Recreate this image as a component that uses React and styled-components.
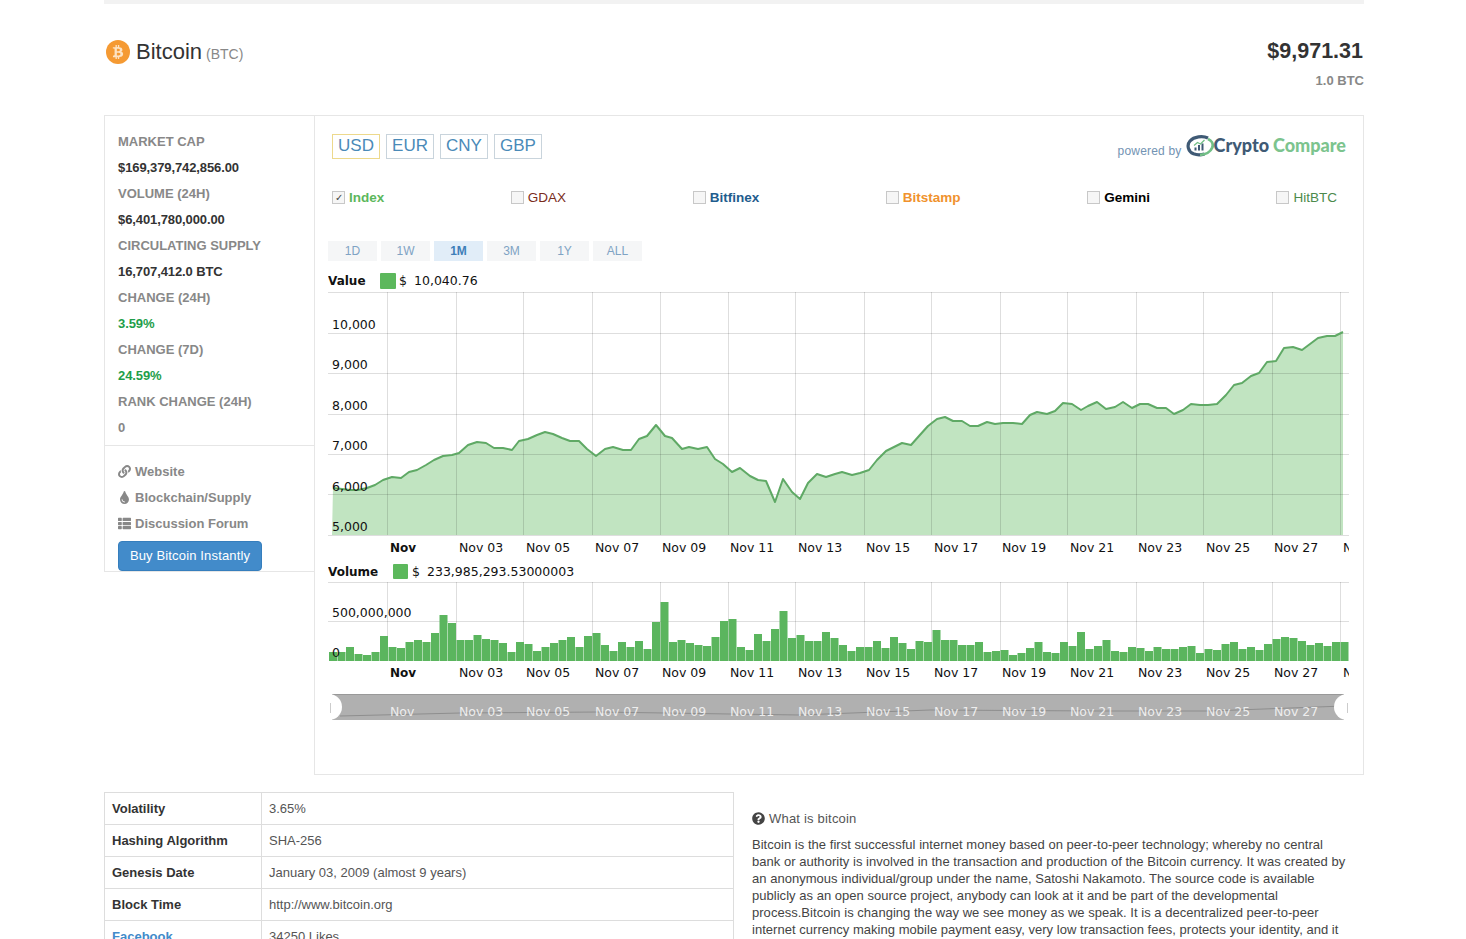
import React from "react";
import styled, { createGlobalStyle } from "styled-components";
import { FaLink, FaTint, FaThList, FaQuestionCircle, FaBtc } from "react-icons/fa";

const Global = createGlobalStyle`
  html, body {
    margin: 0;
    padding: 0;
    height: 939px;
    overflow: hidden;
    background: #fff;
    font-family: "Liberation Sans", Arial, sans-serif;
    font-size: 13px;
    color: #333;
  }
  * { box-sizing: border-box; }
`;

const linePoints = [
  [333, 488], [342, 489], [350, 490], [358, 490], [367, 488], [375, 485], [383, 480], [392, 477], [401, 478],
  [409, 472], [417, 470], [426, 465], [434, 460], [443, 456], [452, 455], [459, 453], [468, 445], [477, 442],
  [486, 443], [494, 448], [503, 448], [512, 450], [519, 441], [528, 439], [537, 435], [545, 432], [553, 434],
  [562, 438], [570, 441], [579, 441], [587, 449], [596, 456], [605, 449], [613, 447], [623, 450], [631, 450],
  [639, 439], [647, 436], [656, 425], [665, 436], [672, 438], [682, 449], [689, 447], [698, 449], [707, 447],
  [715, 459], [723, 464], [732, 472], [740, 468], [750, 476], [758, 480], [766, 481], [775, 502], [783, 479],
  [792, 492], [800, 499], [808, 483], [817, 474], [826, 477], [835, 474], [842, 472], [852, 475], [860, 473],
  [869, 470], [877, 460], [886, 451], [894, 447], [902, 443], [911, 445], [919, 436], [928, 426], [937, 419],
  [945, 417], [953, 421], [962, 421], [970, 426], [978, 426], [987, 422], [995, 424], [1003, 423], [1013, 423],
  [1022, 424], [1030, 415], [1037, 412], [1047, 414], [1055, 411], [1063, 403], [1072, 404], [1081, 410],
  [1088, 406], [1097, 402], [1106, 409], [1115, 407], [1123, 402], [1132, 408], [1140, 404], [1148, 404],
  [1157, 408], [1166, 408], [1174, 414], [1183, 410], [1191, 404], [1200, 405], [1208, 405], [1217, 404],
  [1226, 395], [1234, 385], [1242, 383], [1251, 376], [1259, 373], [1267, 362], [1276, 361], [1284, 348],
  [1293, 347], [1302, 350], [1310, 344], [1318, 338], [1327, 336], [1335, 336], [1343, 332],
];

// bar heights in px, read off the volume chart
const volumes = [
  9, 9, 14, 7, 6, 9, 25, 14, 13, 19, 21, 19, 28, 46, 38, 21, 21, 26, 22, 21, 18, 9, 19, 17, 10, 14, 18, 21, 24,
  14, 25, 28, 16, 10, 19, 14, 20, 12, 39, 59, 19, 21, 18, 16, 15, 24, 40, 42, 14, 11, 27, 20, 32, 50, 23, 26,
  20, 20, 29, 23, 16, 10, 14, 14, 20, 13, 24, 18, 12, 20, 19, 31, 21, 21, 16, 16, 19, 9, 10, 11, 6, 8, 13, 19,
  9, 8, 19, 15, 29, 12, 15, 21, 10, 9, 14, 13, 10, 14, 12, 12, 14, 15, 8, 12, 11, 17, 19, 12, 14, 11, 17, 22,
  24, 23, 20, 16, 18, 15, 19, 19,
];

const gridX = [387, 456, 523, 592, 660, 728, 795, 864, 931, 1000, 1067, 1136, 1203, 1272, 1340];
const priceLines = [292, 333, 373, 414, 454, 494, 535];
const priceLabels = [["10,000", 329], ["9,000", 369], ["8,000", 410], ["7,000", 450], ["6,000", 491], ["5,000", 531]];
const dateLabels = [
  ["Nov 03", 459], ["Nov 05", 526], ["Nov 07", 595], ["Nov 09", 662], ["Nov 11", 730], ["Nov 13", 798],
  ["Nov 15", 866], ["Nov 17", 934], ["Nov 19", 1002], ["Nov 21", 1070], ["Nov 23", 1138], ["Nov 25", 1206],
  ["Nov 27", 1274],
];

const stats = [
  ["MARKET CAP", "$169,379,742,856.00"],
  ["VOLUME (24H)", "$6,401,780,000.00"],
  ["CIRCULATING SUPPLY", "16,707,412.0 BTC"],
  ["CHANGE (24H)", "3.59%", "up"],
  ["CHANGE (7D)", "24.59%", "up"],
  ["RANK CHANGE (24H)", "0", "muted"],
];

const exchanges = [
  { name: "Index", color: "#5cb85c", bold: true, checked: true },
  { name: "GDAX", color: "#7a2c1c" },
  { name: "Bitfinex", color: "#1f5d8e", bold: true },
  { name: "Bitstamp", color: "#f0922e", bold: true },
  { name: "Gemini", color: "#000", bold: true },
  { name: "HitBTC", color: "#4c8a4c" },
];

const facts = [
  ["Volatility", "3.65%"],
  ["Hashing Algorithm", "SHA-256"],
  ["Genesis Date", "January 03, 2009 (almost 9 years)"],
  ["Block Time", "http://www.bitcoin.org"],
  ["Facebook", "34250 Likes", true],
];

const App = () => {
  const linePath = linePoints.map((p) => p.join(",")).join(" ");
  const areaPath = `332,535 ${linePath} 1343,535`;
  return (
    <Page>
      <Global />
      <TopBar />
      <Header>
        <Title>
          <CoinBadge>
            <FaBtc />
          </CoinBadge>
          <CoinName>Bitcoin</CoinName>
          <CoinSymbol>(BTC)</CoinSymbol>
        </Title>
        <Price>
          <PriceUsd>$9,971.31</PriceUsd>
          <PriceBtc>1.0 BTC</PriceBtc>
        </Price>
      </Header>

      <Main>
        <Sidebar>
          <StatList>
            {stats.map(([label, value, tone]) => (
              <React.Fragment key={label}>
                <StatLabel>{label}</StatLabel>
                <StatValue $tone={tone}>{value}</StatValue>
              </React.Fragment>
            ))}
          </StatList>
          <Links>
            <LinkRow>
              <FaLink />
              Website
            </LinkRow>
            <LinkRow>
              <FaTint />
              Blockchain/Supply
            </LinkRow>
            <LinkRow>
              <FaThList />
              Discussion Forum
            </LinkRow>
            <BuyButton>Buy Bitcoin Instantly</BuyButton>
          </Links>
        </Sidebar>

        <ChartPanel>
          <PanelTop>
            <Currencies>
              <Currency $active>USD</Currency>
              <Currency>EUR</Currency>
              <Currency>CNY</Currency>
              <Currency>GBP</Currency>
            </Currencies>
            <Powered>
              <PoweredText>powered by</PoweredText>
              <LogoMark width="28" height="22" viewBox="0 0 28 22">
                <path d="M22 3C16.500 0.500 8 1.500 4 6 0.500 10 2 16.500 7.500 18.800c3.500 1.300 7.500 1.200 11 0.200" fill="none" stroke="#3f5a75" strokeWidth="3.200" />
                <path d="M14 19.800c5.500 0 10.500-2.800 12.300-7.300 1.300-3.700-0.800-7-4.300-8.500" fill="none" stroke="#72bf86" strokeWidth="2.800" />
                <path d="M8.500 15.500v-3h2v3zM12 15.500V10h2v5.500zM15.500 15.500V8.500h2v7z" fill="#3f5a75" />
                <path d="M8 10.500l3.500-3 3 1.500 4-4" fill="none" stroke="#72bf86" strokeWidth="1.300" />
              </LogoMark>
              <LogoCrypto>Crypto</LogoCrypto>
              <LogoCompare>Compare</LogoCompare>
            </Powered>
          </PanelTop>

          <Exchanges>
            {exchanges.map((item) => (
              <Exchange key={item.name} $color={item.color} $bold={item.bold}>
                <Tick>{item.checked && "✓"}</Tick>
                {item.name}
              </Exchange>
            ))}
          </Exchanges>

          <Ranges>
            {["1D", "1W", "1M", "3M", "1Y", "ALL"].map((r) => (
              <Range key={r} $active={r === "1M"}>
                {r}
              </Range>
            ))}
          </Ranges>

          <ChartSvg width="1021" height="458" viewBox="328 267 1021 458">
            <defs>
              <clipPath id="scroll">
                <rect x="328" y="694" width="1021" height="26" />
              </clipPath>
            </defs>

            {/* value chart */}
            <LegendName x="328" y="285">Value</LegendName>
            <rect x="380" y="273" width="16" height="16" rx="1" fill="#5cb85c" />
            <AxisText x="399" y="285">$</AxisText>
            <AxisText x="414" y="285">10,040.76</AxisText>
            <polygon points={areaPath} fill="#5cb85c" fillOpacity="0.38" />
            {priceLines.map((y) => (
              <GridLine key={y} x1="328" x2="1349" y1={y + 0.5} y2={y + 0.5} />
            ))}
            {gridX.map((x) => (
              <GridLine key={x} x1={x + 0.5} x2={x + 0.5} y1="292" y2="535" />
            ))}
            <polyline points={linePath} fill="none" stroke="#5fa965" strokeWidth="2" strokeLinejoin="round" />
            {priceLabels.map(([t, y]) => (
              <AxisText key={t} x="332" y={y}>{t}</AxisText>
            ))}
            <AxisBold x="390" y="552">Nov</AxisBold>
            {dateLabels.map(([t, x]) => (
              <AxisText key={t} x={x} y="552">{t}</AxisText>
            ))}
            <AxisText x="1343" y="552">N</AxisText>

            {/* volume chart */}
            <LegendName x="328" y="576">Volume</LegendName>
            <rect x="393" y="564" width="15" height="15" rx="1" fill="#5cb85c" />
            <AxisText x="412" y="576">$</AxisText>
            <AxisText x="427" y="576">233,985,293.53000003</AxisText>
            <GridLine x1="328" x2="1349" y1="582.5" y2="582.5" />
            <GridLine x1="328" x2="1349" y1="621.5" y2="621.5" />
            {gridX.map((x) => (
              <GridLine key={x} x1={x + 0.5} x2={x + 0.5} y1="582" y2="661" />
            ))}
            {volumes.map((h, i) => (
              <rect key={i} x={329 + i * 8.5} y={661 - h} width="8" height={h} fill="#5bb55e" />
            ))}
            <AxisText x="332" y="617">500,000,000</AxisText>
            <AxisText x="332" y="657">0</AxisText>
            <AxisBold x="390" y="677">Nov</AxisBold>
            {dateLabels.map(([t, x]) => (
              <AxisText key={t} x={x} y="677">{t}</AxisText>
            ))}
            <AxisText x="1343" y="677">N</AxisText>

            {/* scrollbar */}
            <g clipPath="url(#scroll)">
              <rect x="332" y="694" width="1012" height="26" fill="#b0b0b0" />
              <line x1="332" x2="1344" y1="694.5" y2="694.5" stroke="#999" />
              <polyline points="340,716 460,713 600,712 730,714 800,715 930,710 1100,711 1210,711 1344,706" fill="none" stroke="#8e8e8e" />
              <ScrollText x="390" y="716">Nov</ScrollText>
              {dateLabels.map(([t, x]) => (
                <ScrollText key={t} x={x} y="716">{t}</ScrollText>
              ))}
            </g>
            <circle cx="329" cy="707" r="13" fill="#fff" />
            <circle cx="1347" cy="707" r="13" fill="#fff" />
            <line x1="330.500" x2="330.500" y1="703" y2="713" stroke="#ccc" />
            <line x1="1347.500" x2="1347.500" y1="703" y2="713" stroke="#ccc" />
          </ChartSvg>
        </ChartPanel>
      </Main>

      <Bottom>
        <FactTable>
          <tbody>
            {facts.map(([k, v, link]) => (
              <tr key={k}>
                <FactKey $link={link}>{k}</FactKey>
                <FactValue>{v}</FactValue>
              </tr>
            ))}
          </tbody>
        </FactTable>
        <About>
          <AboutTitle>
            <FaQuestionCircle />
            What is bitcoin
          </AboutTitle>
          <AboutText>
            Bitcoin is the first successful internet money based on peer-to-peer technology; whereby no central bank
            or authority is involved in the transaction and production of the Bitcoin currency. It was created by an
            anonymous individual/group under the name, Satoshi Nakamoto. The source code is available publicly as an
            open source project, anybody can look at it and be part of the developmental process.Bitcoin is changing
            the way we see money as we speak. It is a decentralized peer-to-peer internet currency making mobile
            payment easy, very low transaction fees, protects your identity, and it
          </AboutText>
        </About>
      </Bottom>
    </Page>
  );
};

export default App;

const Page = styled.div`
  width: 1260px;
  margin-left: 104px;
`;
const TopBar = styled.div`
  height: 4px;
  background: #f2f2f2;
`;
const Header = styled.div`
  height: 111px;
  display: flex;
  justify-content: space-between;
  align-items: flex-start;
  padding-top: 33px;
`;
const Title = styled.div`
  display: flex;
  align-items: center;
  padding-left: 2px;
`;
const CoinBadge = styled.div`
  width: 24px;
  height: 24px;
  border-radius: 50%;
  background: #f59a33;
  color: #fde3c4;
  display: flex;
  align-items: center;
  justify-content: center;
  margin-right: 6px;
  svg {
    width: 14px;
    height: 14px;
  }
`;
const CoinName = styled.span`
  font-size: 22px;
  line-height: 30px;
  color: #333;
`;
const CoinSymbol = styled.span`
  font-size: 14px;
  color: #888;
  margin: 4px 0 0 4px;
`;
const Price = styled.div`
  text-align: right;
`;
const PriceUsd = styled.div`
  font-size: 21.5px;
  line-height: 28px;
  font-weight: bold;
  color: #333;
  padding-right: 1px;
`;
const PriceBtc = styled.div`
  font-size: 13px;
  font-weight: bold;
  color: #888;
  margin-top: 8px;
`;
const Main = styled.div`
  display: flex;
  align-items: flex-start;
`;
const Sidebar = styled.div`
  width: 210px;
  height: 457px;
  border: 1px solid #e6e6e6;
  border-right: none;
`;
const StatList = styled.div`
  padding: 12px 0 5px 13px;
  border-bottom: 1px solid #e6e6e6;
`;
const StatLabel = styled.div`
  height: 26px;
  line-height: 27px;
  font-size: 13px;
  font-weight: bold;
  color: #888;
`;
const statColors = { up: "#1e9e4a", muted: "#888" };
const StatValue = styled.div`
  height: 26px;
  line-height: 28px;
  font-size: 13px;
  letter-spacing: -0.1px;
  font-weight: bold;
  color: ${(p) => statColors[p.$tone] || "#333"};
`;
const Links = styled.div`
  padding: 12px 0 0 13px;
`;
const LinkRow = styled.div`
  height: 26px;
  display: flex;
  align-items: center;
  gap: 4px;
  font-size: 13px;
  font-weight: bold;
  color: #888;
  svg {
    width: 13px;
    height: 13px;
  }
`;
const BuyButton = styled.button`
  display: block;
  width: 144px;
  height: 30px;
  margin-top: 5px;
  border: 1px solid #357ebd;
  border-radius: 4px;
  background: #428bca;
  color: #fff;
  font-family: inherit;
  font-size: 13px;
  letter-spacing: 0.15px;
  padding: 0 0 2px;
`;
const ChartPanel = styled.div`
  width: 1050px;
  height: 660px;
  border: 1px solid #e6e6e6;
  padding: 18px 14px 0 13px;
`;
const PanelTop = styled.div`
  display: flex;
  justify-content: space-between;
  align-items: center;
  height: 25px;
  padding: 0 3px 0 4px;
`;
const Currencies = styled.div`
  display: flex;
  gap: 6px;
`;
const Currency = styled.div`
  width: 48px;
  height: 25px;
  line-height: 22px;
  text-align: center;
  font-size: 17px;
  color: #4a8ab8;
  border: 1px solid ${(p) => (p.$active ? "#edd98c" : "#c9d4dc")};
`;
const Powered = styled.div`
  display: flex;
  align-items: center;
  margin-top: -4px;
`;
const PoweredText = styled.span`
  font-size: 12px;
  color: #7393b3;
  letter-spacing: 0.2px;
  margin: 12px 6px 0 0;
`;
const LogoMark = styled.svg`
  display: block;
  margin: 3px 0 0 -2px;
`;
const LogoCrypto = styled.span`
  font-family: Lato, sans-serif;
  font-weight: 900;
  font-size: 18px;
  color: #3f5a75;
`;
const LogoCompare = styled.span`
  font-family: Lato, sans-serif;
  font-weight: 900;
  font-size: 18px;
  color: #7cc48e;
  margin-left: 4px;
`;
const Exchanges = styled.div`
  display: flex;
  justify-content: space-between;
  align-items: center;
  height: 20px;
  margin-top: 28px;
  padding: 0 12px 0 4px;
`;
const Exchange = styled.label`
  display: flex;
  align-items: center;
  gap: 4px;
  font-size: 13.5px;
  font-weight: ${(p) => (p.$bold ? "bold" : "normal")};
  color: ${(p) => p.$color};
`;
const Tick = styled.span`
  width: 13px;
  height: 13px;
  border: 1px solid #c8c8c8;
  background: #f6f6f6;
  color: #444;
  font-size: 10px;
  font-weight: normal;
  line-height: 11px;
  text-align: center;
`;
const Ranges = styled.div`
  display: flex;
  gap: 4px;
  margin-top: 34px;
`;
const Range = styled.div`
  width: 49px;
  height: 20px;
  line-height: 20px;
  text-align: center;
  font-size: 12px;
  font-weight: ${(p) => (p.$active ? "bold" : "normal")};
  color: ${(p) => (p.$active ? "#3f7fb8" : "#7fa3c4")};
  background: ${(p) => (p.$active ? "#e1edf8" : "#f5f6f7")};
`;
const ChartSvg = styled.svg`
  display: block;
  margin-top: 6px;
`;
const GridLine = styled.line`
  stroke: #000;
  stroke-opacity: 0.13;
  stroke-width: 1;
`;
const AxisText = styled.text`
  font-family: "DejaVu Sans", Verdana, sans-serif;
  font-size: 12.5px;
  fill: #111;
`;
const AxisBold = styled(AxisText)`
  font-size: 12px;
  font-weight: bold;
`;
const LegendName = styled(AxisText)`
  font-size: 12px;
  font-weight: bold;
`;
const ScrollText = styled(AxisText)`
  fill: #fff;
  fill-opacity: 0.8;
`;
const Bottom = styled.div`
  display: flex;
  align-items: flex-start;
  margin-top: 17px;
`;
const FactTable = styled.table`
  width: 630px;
  border-collapse: collapse;
  flex: none;
  font-size: 13px;
`;
const FactKey = styled.td`
  width: 157px;
  height: 32px;
  padding: 0 7px;
  border: 1px solid #ddd;
  font-weight: bold;
  color: ${(p) => (p.$link ? "#428bca" : "#333")};
`;
const FactValue = styled.td`
  height: 32px;
  padding: 0 7px;
  border: 1px solid #ddd;
  color: #555;
`;
const About = styled.div`
  flex: 1;
  margin-left: 18px;
  padding-top: 17px;
`;
const AboutTitle = styled.div`
  display: flex;
  align-items: center;
  gap: 4px;
  height: 18px;
  color: #555;
  font-size: 13px;
  letter-spacing: 0.2px;
  svg {
    width: 13px;
    height: 13px;
    color: #444;
  }
`;
const AboutText = styled.p`
  margin: 9px 0 0;
  width: 600px;
  font-size: 13px;
  letter-spacing: 0.03px;
  line-height: 17px;
  color: #444;
`;
